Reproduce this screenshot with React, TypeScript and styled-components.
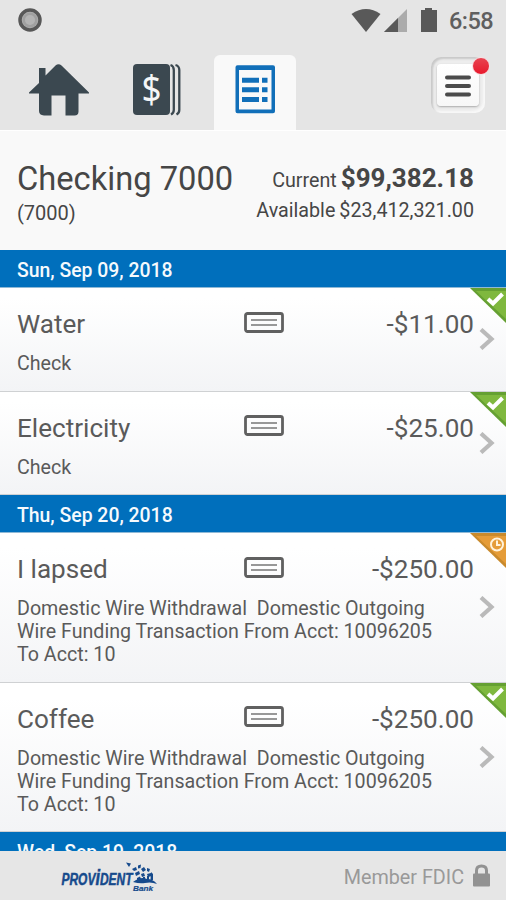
import React from "react";
import styled, { createGlobalStyle } from "styled-components";

const Global = createGlobalStyle`
  * { box-sizing: border-box; }
  body { margin: 0; background: #f8f8f8; font-family: Roboto, "Liberation Sans", sans-serif; color: #5a5a5a; }
  svg { display: block; flex: none; }
`;

const Screen = styled.div`
  width: 506px;
  height: 900px;
  display: flex;
  flex-direction: column;
  overflow: hidden;
  background: #f9f9f9;
`;

const StatusBar = styled.div`
  height: 40px;
  flex: none;
  display: flex;
  align-items: center;
  padding: 0 12px 0 18px;
  background: #e5e5e5;
`;

const StatusIcons = styled.div`
  margin-left: auto;
  display: flex;
  align-items: center;
`;

const Clock = styled.span`
  width: 45px;
  margin-left: 10px;
  font-size: 23.5px;
  line-height: 28px;
  font-weight: 500;
  letter-spacing: -0.55px;
  color: #5f5f5f;
  white-space: nowrap;
  padding-top: 2px;
`;

const TabBar = styled.nav`
  height: 90px;
  flex: none;
  display: flex;
  align-items: flex-end;
  background: #e5e5e5;
`;

const Tab = styled.button<{ $width: number; $shift?: number; $active?: boolean }>`
  width: ${(p) => p.$width}px;
  height: 75px;
  border: 0;
  padding: 0 ${(p) => p.$shift ?? 0}px 0 0;
  display: flex;
  justify-content: center;
  align-items: flex-start;
  border-radius: 6px 6px 0 0;
  background: ${(p) => (p.$active ? "#f9f9f9" : "transparent")};
`;

const MenuButton = styled.button`
  position: relative;
  width: 54px;
  height: 56px;
  margin: 0 21px 17px auto;
  padding: 0;
  border: 0;
  border-radius: 10px;
  display: grid;
  place-items: center;
  background: #ededed;
  box-shadow: inset 2px 2px 2px #c9c9c9, inset -2px -2px 2px #f8f8f8;
`;

const MenuFace = styled.span`
  width: 42px;
  height: 42px;
  border-radius: 4px;
  display: grid;
  place-items: center;
  padding-top: 2px;
  background: linear-gradient(#fff, #f7f7f7);
  box-shadow: 0 1px 2px #aaa;
`;

const AlertDot = styled.span`
  position: absolute;
  top: 0;
  right: -5px;
  width: 18px;
  height: 18px;
  border-radius: 50%;
  border: 1px solid #f8dfe2;
  background: linear-gradient(#e84350, #e8192c);
`;

const Account = styled.header`
  height: 120px;
  flex: none;
  display: flex;
  justify-content: space-between;
  padding: 27px 32px 0 17px;
  background: #f9f9f9;
  border-top: 1px solid #fff;
  color: #464646;
`;

const Column = styled.div<{ $end?: boolean }>`
  display: flex;
  flex-direction: column;
  align-items: ${(p) => (p.$end ? "flex-end" : "flex-start")};
`;

const AccountName = styled.h1`
  margin: 0;
  font-size: 32.7px;
  line-height: 43px;
  font-weight: 400;
  white-space: nowrap;
`;

const AccountNumber = styled.span`
  font-size: 20px;
  line-height: 24px;
`;

const Balance = styled.div<{ $line: number }>`
  display: flex;
  align-items: baseline;
  gap: 4px;
  font-size: 19.7px;
  line-height: ${(p) => p.$line}px;
  white-space: nowrap;
`;

const Amount = styled.strong`
  font-size: 26px;
  font-weight: 700;
`;

const DateBar = styled.h2`
  height: 38px;
  flex: none;
  margin: 0;
  padding: 0 17px;
  background: #006fbc;
  border-bottom: 1px solid #8fb9d6;
  color: #f6fafd;
  font-size: 19.4px;
  line-height: 41px;
  font-weight: 500;
  white-space: nowrap;
`;

const Row = styled.article<{ $height: number }>`
  position: relative;
  height: ${(p) => p.$height}px;
  flex: none;
  padding: 18px 32px 0 17px;
  border-bottom: 1px solid #cfd1d3;
  background: linear-gradient(#fff 10%, #f3f4f6);
`;

const Summary = styled.div`
  display: grid;
  grid-template-columns: 227px 40px 1fr;
  align-items: center;
  height: 36px;
  font-size: 26.1px;
  line-height: 36px;
  white-space: nowrap;
`;

const CheckMark = styled.span`
  padding-bottom: 4px;
`;

const Value = styled.span`
  text-align: right;
`;

const Details = styled.p`
  margin: 10px 0 0;
  font-size: 19.67px;
  line-height: 23.1px;
  white-space: pre;
`;

const Flag = styled.span`
  position: absolute;
  top: 0;
  right: 0;
`;

const Arrow = styled.span`
  position: absolute;
  right: 11px;
  top: 50%;
  transform: translateY(-50%);
`;

const List = styled.main`
  flex: 1;
  min-height: 0;
  overflow: hidden;
  display: flex;
  flex-direction: column;
`;

const Footer = styled.footer`
  height: 49px;
  flex: none;
  display: flex;
  align-items: center;
  padding: 0 16px 0 61px;
  background: #e6e6e6;
  color: #999;
`;

const Member = styled.span`
  margin: 4px 9px 0 auto;
  font-size: 19.75px;
  line-height: 26px;
`;

const CheckIcon = () => (
  <svg width="40" height="21" viewBox="0 0 40 21" fill="none" stroke="#606060">
    <rect x="1.5" y="1.5" width="37" height="18" rx="2" strokeWidth="2.8" />
    <path d="M7 8H33M7 13H33" strokeWidth="1.6" stroke="#777" />
  </svg>
);

const Chevron = () => (
  <svg width="16" height="22" viewBox="0 0 16 22" fill="none" stroke="#bababa" strokeWidth="4.2">
    <path d="M2 1.5L12.5 11L2 20.5" />
  </svg>
);

const StatusFlag = ({ pending }: { pending?: boolean }) => (
  <svg width="36" height="35" viewBox="0 0 36 35" fill="none">
    <path d="M0 0H36V35Z" fill={pending ? "#c98a2c" : "#65a032"} />
    <path d="M6 3H36V31Z" fill={pending ? "#e59c38" : "#7fb83e"} />
    {pending ? (
      <g stroke="#fff3dc" strokeWidth="2">
        <circle cx="27" cy="11.5" r="6" />
        <path d="M27 7.5V12H30.500" />
      </g>
    ) : (
      <path d="M18 11L23 15.500L32.500 6" stroke="#fff" strokeWidth="4" />
    )}
  </svg>
);

type Entry = { name: string; value: string; details: string; tall?: boolean; pending?: boolean };

const wire =
  "Domestic Wire Withdrawal  Domestic Outgoing\nWire Funding Transaction From Acct: 10096205\nTo Acct: 10";

const groups: { date: string; entries: Entry[] }[] = [
  {
    date: "Sun, Sep 09, 2018",
    entries: [
      { name: "Water", value: "-$11.00", details: "Check" },
      { name: "Electricity", value: "-$25.00", details: "Check" },
    ],
  },
  {
    date: "Thu, Sep 20, 2018",
    entries: [
      { name: "I lapsed", value: "-$250.00", details: wire, tall: true, pending: true },
      { name: "Coffee", value: "-$250.00", details: wire, tall: true },
    ],
  },
  { date: "Wed, Sep 19, 2018", entries: [] },
];

const Transaction = ({ entry }: { entry: Entry }) => (
  <Row $height={entry.tall ? 149.7 : 103.5}>
    <Summary>
      <span>{entry.name}</span>
      <CheckMark><CheckIcon /></CheckMark>
      <Value>{entry.value}</Value>
    </Summary>
    <Details>{entry.details}</Details>
    <Flag><StatusFlag pending={entry.pending} /></Flag>
    <Arrow><Chevron /></Arrow>
  </Row>
);

const LogoText = styled.text`
  font-family: "Liberation Sans", Arial, sans-serif;
  font-weight: 700;
  font-style: italic;
  fill: #164a8c;
  stroke: #164a8c;
`;

const Dollar = styled.text`
  font-family: "Noto Sans", sans-serif;
  fill: #f4f6f7;
`;

const BankLogo = () => (
  <svg width="98" height="36" viewBox="0 0 98 36">
    <LogoText x="0.5" y="26.500" fontSize="16" strokeWidth="0.5" textLength="71" lengthAdjust="spacingAndGlyphs">
      PROV<tspan fontSize="22">i</tspan>DENT
    </LogoText>
    <LogoText x="72" y="32.800" fontSize="8" strokeWidth="0.2" textLength="20" lengthAdjust="spacingAndGlyphs">Bank</LogoText>
    <g fill="#164a8c">
      <path d="M65 4.500L70 5.500L68 9ZM71 11L75 9L76 12L73 13ZM77 7.500L80 6.500L79.500 10L77 10.500ZM74 15L78 13L79 16L75 18ZM80 11L83 9L85 12L82 14ZM86 10L89 11L88 14L86 13ZM80 16L83 15L84 18L81 19ZM86 16L90 15L91 18L87 19ZM76 20L79 18.500L80 21L76 22Z" />
      <path d="M72 24Q80 18 86 21Q92 21 96 26Q90 23.500 84 25Q79 26 72 24Z" />
      <path d="M90 14L92 16V22H89.500ZM82 19H84V23H82ZM86 18H88V23H86Z" />
    </g>
  </svg>
);

export default function App() {
  return (
    <Screen>
      <Global />
      <StatusBar>
        <svg width="24" height="24" viewBox="0 0 24 24">
          <circle cx="12" cy="12" r="10" fill="#b0b0b0" stroke="#585858" strokeWidth="3.5" />
          <circle cx="12" cy="12" r="7.5" fill="#a0a0a0" />
          <circle cx="12" cy="12" r="5" fill="#b4b4b4" />
        </svg>
        <StatusIcons>
          <svg width="88" height="26" viewBox="0 0 88 26" fill="#595959">
            <path d="M0.500 7Q15 -3 29.500 7L15 25Z" />
            <path d="M56 2V25H33Z" fill="#ababab" />
            <path d="M47 11V25H33Z" />
            <path d="M70 3H74V1H81V3H86V25H70Z" />
          </svg>
          <Clock>6:58</Clock>
        </StatusIcons>
      </StatusBar>
      <TabBar>
        <Tab $width={117} aria-label="Home">
          <svg width="60" height="62" viewBox="0 0 60 62" fill="#3b4850">
            <path d="M0 37.500L10 28V13H16.500V20.500L26.500 10.500Q29.500 8 32.500 10.500L60 37.500V38.500H49.500V56.500Q49.500 60.500 45.500 60.500H36.500V40.500H22.500V60.500H15Q10 60 10 56V38.500H0Z" />
          </svg>
        </Tab>
        <Tab $width={97} $shift={17} aria-label="Accounts">
          <svg width="50" height="61" viewBox="0 0 50 61">
            <rect x="1" y="9" width="37" height="51" rx="4" fill="#3b4850" />
            <path d="M38.500 10Q41.800 11 41.800 15V55Q41.800 58 39 59.500M43.500 10Q47.300 11 47.300 15V55Q47.300 58 44.500 59.500" fill="none" stroke="#3b4850" strokeWidth="2.300" />
            <Dollar x="9.500" y="48" fontSize="39" textLength="20" lengthAdjust="spacingAndGlyphs">$</Dollar>
          </svg>
        </Tab>
        <Tab $width={82} $active aria-label="Transactions">
          <svg width="40" height="60" viewBox="0 0 40 60">
            <path fill="#116fb9" fillRule="evenodd" d="M2.500 10.300H38Q40 10.300 40 12.300V56.300Q40 58.300 38 58.300H2.500Q0.500 58.300 0.500 56.300V12.300Q0.500 10.300 2.500 10.300ZM4 15V54.500H36.500V15Z" />
            <path fill="#116fb9" d="M7 22.700H24V27.700H7zM7 32.300H24V37.300H7zM7 42H24V47H7zM27 22.700H32.500V27.700H27zM27 32.300H32.500V37.300H27zM27 42H32.500V47H27z" />
          </svg>
        </Tab>
        <MenuButton aria-label="Menu">
          <MenuFace>
            <svg width="28" height="24" viewBox="0 0 28 24" stroke="#4b4b4b" strokeWidth="4" strokeLinecap="round">
              <path d="M3 3.500H25M3 12H25M3 20.500H25" />
            </svg>
          </MenuFace>
          <AlertDot />
        </MenuButton>
      </TabBar>
      <Account>
        <Column>
          <AccountName>Checking 7000</AccountName>
          <AccountNumber>(7000)</AccountNumber>
        </Column>
        <Column $end>
          <Balance $line={41}>Current <Amount>$99,382.18</Amount></Balance>
          <Balance $line={19}>Available <span>$23,412,321.00</span></Balance>
        </Column>
      </Account>
      <List>
        {groups.map((g) => (
          <React.Fragment key={g.date}>
            <DateBar>{g.date}</DateBar>
            {g.entries.map((e) => <Transaction key={e.name} entry={e} />)}
          </React.Fragment>
        ))}
      </List>
      <Footer>
        <BankLogo />
        <Member>Member FDIC</Member>
        <svg width="17" height="23" viewBox="0 0 17 23">
          <path d="M3.500 11V6.500Q3.500 2 8.500 2T13.500 6.500V11" fill="none" stroke="#929292" strokeWidth="3" />
          <rect y="9.500" width="17" height="13" rx="1" fill="#929292" />
        </svg>
      </Footer>
    </Screen>
  );
}
